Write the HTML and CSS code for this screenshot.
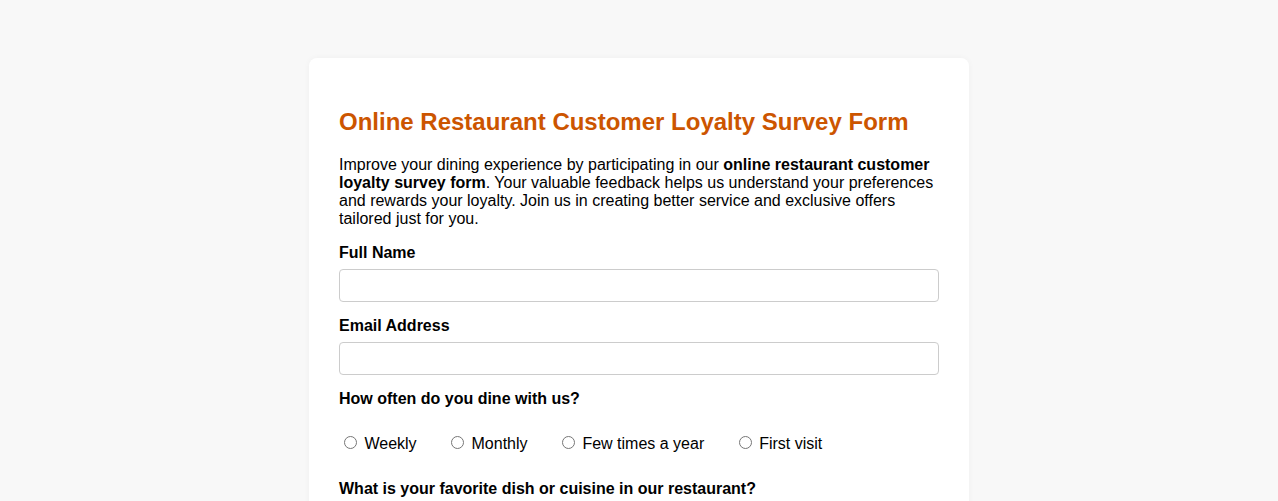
FILE: index.html
```html
<!DOCTYPE html>
<html lang="en">
<head>
<meta charset="utf-8">
<title>Online Restaurant Customer Loyalty Survey Form</title>
<link rel="stylesheet" href="styles.css">
</head>
<body>
<div class="card">
  <form class="survey">
    <h1 class="title">Online Restaurant Customer Loyalty Survey Form</h1>
    <p class="intro">Improve your dining experience by participating in our <strong>online restaurant customer loyalty survey form</strong>. Your valuable feedback helps us understand your preferences and rewards your loyalty. Join us in creating better service and exclusive offers tailored just for you.</p>

    <label class="field-label" for="name">Full Name</label>
    <input class="text-input" type="text" id="name">

    <label class="field-label" for="email">Email Address</label>
    <input class="text-input" type="email" id="email">

    <div class="field-label">How often do you dine with us?</div>
    <div class="radio-group">
      <label class="radio-option"><input type="radio" name="freq"> Weekly</label>
      <label class="radio-option"><input type="radio" name="freq"> Monthly</label>
      <label class="radio-option"><input type="radio" name="freq"> Few times a year</label>
      <label class="radio-option"><input type="radio" name="freq"> First visit</label>
    </div>

    <label class="field-label" for="dish">What is your favorite dish or cuisine in our restaurant?</label>
    <input class="text-input" type="text" id="dish">
  </form>
</div>
</body>
</html>
```

FILE: styles.css
```css
html, body {
  background: #f8f8f8;
}
body {
  margin: 0;
  padding: 58px 8px 40px;
  font-family: Arial, "Liberation Sans", sans-serif;
  font-size: 16px;
  color: #000;
}
.card {
  width: 600px;
  margin: 0 auto;
  padding: 30px;
  background: #fff;
  border-radius: 8px;
  box-shadow: 0 0 6px rgba(0, 0, 0, 0.04);
}
.survey {
  display: block;
}
.title {
  margin: 20px 0 20px;
  font-size: 24px;
  font-weight: bold;
  color: #cc5500;
}
.intro {
  margin: 0 0 16px;
  line-height: 18px;
}
.field-label {
  display: block;
  font-weight: bold;
  line-height: 18px;
  margin-bottom: 7px;
}
.text-input {
  display: block;
  box-sizing: border-box;
  width: 100%;
  height: 33px;
  margin: 0 0 15px;
  padding: 6px 8px;
  border: 1px solid #cccccc;
  border-radius: 4px;
  font: inherit;
  background: #fff;
}
.radio-group {
  padding: 18px 0 27px;
  line-height: 18px;
}
.radio-option {
  margin-right: 25px;
}
.radio-option input {
  margin: 3px 3px 0 5px;
}
```
